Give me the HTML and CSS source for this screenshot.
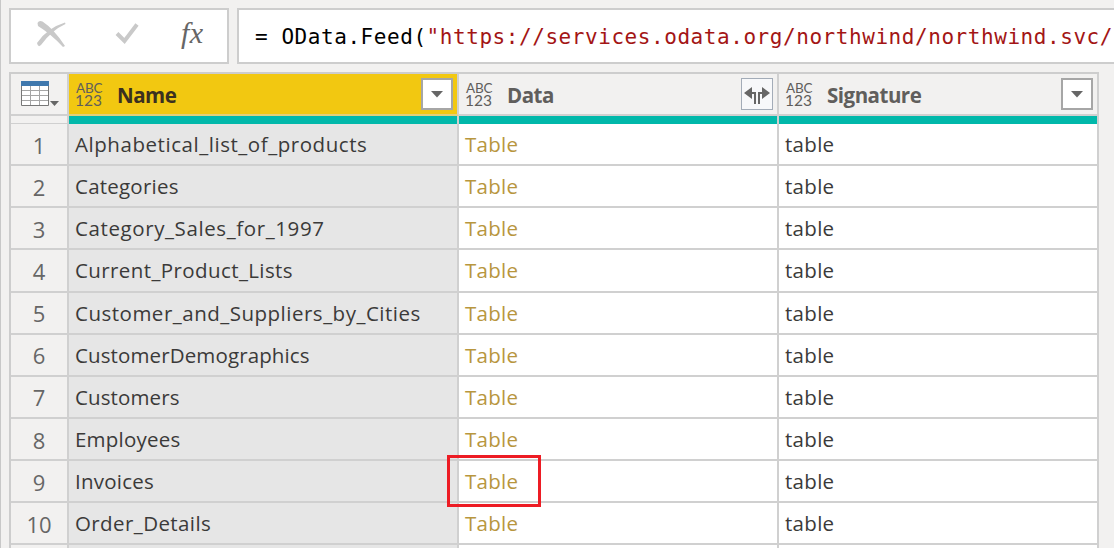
FILE: index.html
```
<!DOCTYPE html>
<html lang="en">
<head>
<meta charset="utf-8">
<title>Query preview</title>
<link rel="stylesheet" href="styles.css">
</head>
<body>
<main class="editor">
  <div class="formula-bar">
    <div class="tools">
      <svg width="216" height="52" viewBox="11 10 216 52">
        <path d="M37.500 23Q39 20 42.500 21.500Q54 29 65 46L63 47Q51 34 38 26Z" fill="#c9c9c9"/>
        <path d="M37 43Q47 28 65 22.500L65.500 24Q52 30 41 45Q38 48 37 43Z" fill="#c9c9c9"/>
        <path d="M117 33.500L124.500 41L137 24.500" fill="none" stroke="#c9c9c9" stroke-width="4"/>
      </svg>
      <span class="fx">fx</span>
    </div>
    <div class="formula">= OData.Feed(<span class="string">"https://services.odata.org/northwind/northwind.svc/</span></div>
  </div>
  <div class="grid">
    <div class="row head">
      <div class="num">
        <svg width="40" height="30" viewBox="20 80 40 30">
          <path fill="#fff" stroke="#777" d="M21.500 81.500h27v24h-27z"/>
          <path fill="none" stroke="#a5a5a5" d="M22 90.500h26M22 95.500h26M22 100.500h26M30.500 86v19M39.500 86v19"/>
          <path fill="#3f78ad" d="M21 81h28v5H21z"/>
          <path fill="#666" d="M50 101h9l-4.500 5z"/>
        </svg>
      </div>
      <div class="name"><span class="type"><span class="abc">ABC</span><span class="digits">123</span></span><b>Name</b><button class="drop"><svg width="12" height="7"><path d="M0 0h12L6 6.500z"/></svg></button></div>
      <div class="data"><span class="type"><span class="abc">ABC</span><span class="digits">123</span></span><b>Data</b><button class="drop expand"><svg width="28" height="20" viewBox="0 0 28 20"><path d="M1 9l8-6v12zM27 9l-8-6v12z"/><path d="M7 9h5v11M21 9h-5v11" fill="none" stroke="#666" stroke-width="2"/></svg></button></div>
      <div class="sig"><span class="type"><span class="abc">ABC</span><span class="digits">123</span></span><b>Signature</b><button class="drop"><svg width="12" height="7"><path d="M0 0h12L6 6.500z"/></svg></button></div>
    </div>
    <div class="row quality"><div class="num"></div><div class="name"></div><div class="data"></div><div class="sig"></div></div>
    <div class="row"><div class="num">1</div><div class="name loose">Alphabetical_list_of_products</div><div class="data">Table</div><div class="sig">table</div></div>
    <div class="row"><div class="num">2</div><div class="name">Categories</div><div class="data">Table</div><div class="sig">table</div></div>
    <div class="row"><div class="num">3</div><div class="name looser">Category_Sales_for_1997</div><div class="data">Table</div><div class="sig">table</div></div>
    <div class="row"><div class="num">4</div><div class="name medium">Current_Product_Lists</div><div class="data">Table</div><div class="sig">table</div></div>
    <div class="row"><div class="num">5</div><div class="name semi">Customer_and_Suppliers_by_Cities</div><div class="data">Table</div><div class="sig">table</div></div>
    <div class="row"><div class="num">6</div><div class="name tight">CustomerDemographics</div><div class="data">Table</div><div class="sig">table</div></div>
    <div class="row"><div class="num">7</div><div class="name tight">Customers</div><div class="data">Table</div><div class="sig">table</div></div>
    <div class="row"><div class="num">8</div><div class="name">Employees</div><div class="data">Table</div><div class="sig">table</div></div>
    <div class="row"><div class="num">9</div><div class="name">Invoices</div><div class="data">Table<i class="highlight"></i></div><div class="sig">table</div></div>
    <div class="row"><div class="num">10</div><div class="name medium">Order_Details</div><div class="data">Table</div><div class="sig">table</div></div>
    <div class="row"><div class="num"></div><div class="name"></div><div class="data"></div><div class="sig"></div></div>
  </div>
</main>
</body>
</html>
```
FILE: styles.css
```
* { box-sizing: border-box; }
body { margin: 0; background: #f2f1f0; font-family: "Open Sans", "Noto Sans", sans-serif; color: #3b3a39; }
.editor { width: 1114px; height: 548px; overflow: hidden; padding: 8px 0 0 8px; border-left: 1px solid #c8c8c8; }
.formula-bar { display: flex; gap: 8px; height: 56px; }
.tools, .formula { background: #fff; border: 2px solid #cdcdcd; }
.tools { display: flex; width: 220px; flex: none; position: relative; }
.fx { position: absolute; left: 170px; top: 5px; font: italic 30px/35px "Liberation Serif", serif; color: #666; letter-spacing: .5px; }
.formula { flex: 1; border-right: 0; padding-left: 16px; overflow: hidden; white-space: pre; font: 21px/54px "DejaVu Sans Mono", monospace; letter-spacing: .557px; color: #000; }
.string { color: #a31515; }
.grid { width: 1090px; margin-top: 8px; border-left: 2px solid #cdcdcd; border-top: 2px solid #cdcdcd; }
.row { display: grid; grid-template-columns: 58px 390px 320px 320px; height: 42.15px; font-size: 20.5px; }
.row > div { display: flex; align-items: center; position: relative; border-right: 2px solid #d0d0d0; border-bottom: 2px solid #d0d0d0; padding: 0 0 0 6px; background: #fff; white-space: pre; }
.row > .num { justify-content: center; padding: 1px 0 0; background: #f2f1f0; color: #666; font-size: 22px; }
.row > .name { background: #e6e6e6; letter-spacing: .22px; }
.row > .tight { letter-spacing: .12px; }
.row > .medium { letter-spacing: .4px; }
.row > .semi { letter-spacing: .5px; }
.row > .loose { letter-spacing: .55px; }
.row > .looser { letter-spacing: .6px; }
.row > .data { color: #b8963e; letter-spacing: .3px; }
.row > .sig { letter-spacing: .3px; }
.head { height: 42px; }
.row.head > div { background: #f2f1f0; color: #605e5c; padding-bottom: 0; }
.row.head > .num { padding-left: 1px; }
.row.head > .name { background: #f2c811; color: #3b3020; border-bottom-color: #e2cf7a; }
.head b { margin: 1px 0 0 14px; font-size: 20.5px; font-weight: 700; letter-spacing: -.5px; }
.type { display: flex; flex-direction: column; width: 28px; font-family: Lato, sans-serif; color: #605e5c; letter-spacing: 0; }
.abc { font-size: 13.500px; line-height: 12px; padding-left: 1px; letter-spacing: -.2px; }
.digits { font-size: 15.500px; line-height: 13px; }
.drop { width: 32px; height: 32px; margin: 0 4px 0 auto; padding: 0; display: flex; align-items: center; justify-content: center; border: 2px solid #a6a6a6; background: #fff; fill: #666; }
.expand { border-width: 1px; border-color: #a3acb8; background: #f7f8fa; }
.quality { height: 8px; }
.row.quality > div { background: #01b8aa; border-bottom: 0; padding: 0; }
.row.quality > .num { background: #f2f1f0; border-bottom: 1px solid #d0d0d0; }
.highlight { position: absolute; left: -12px; top: -6px; width: 94px; height: 52px; border: 3px solid #ed1c24; z-index: 2; }
```
